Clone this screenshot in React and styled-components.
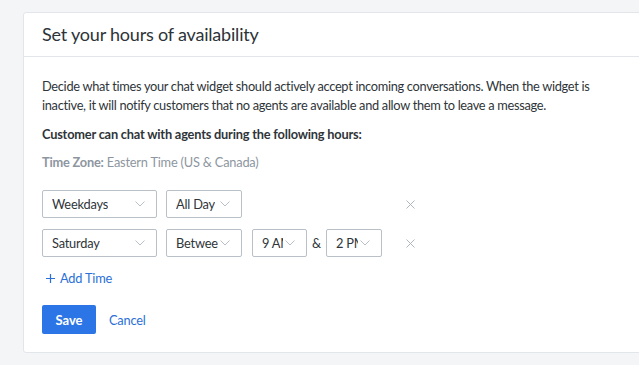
import React from 'react'
import styled, { createGlobalStyle } from 'styled-components'

const GlobalStyle = createGlobalStyle`
  body {
    margin: 0;
    background: #f4f5f7;
    font-family: "Lato", "Liberation Sans", sans-serif;
  }
`

const Chevron = () => (
  <svg width="10" height="6" viewBox="0 0 10 6" fill="none">
    <path d="M0.5 0.5l4.5 4.5 4.5-4.5" stroke="#b8bfc7" strokeWidth="1" />
  </svg>
)

const Cross = () => (
  <svg width="9" height="9" viewBox="0 0 9 9" fill="none">
    <path d="M0.5 0.5l8 8M8.5 0.5l-8 8" stroke="#b0b6bd" strokeWidth="1" />
  </svg>
)

const Plus = () => (
  <svg width="9" height="9" viewBox="0 0 9 9" fill="none">
    <path d="M4.5 0v9M0 4.5h9" stroke="#2b6fd8" strokeWidth="1.2" />
  </svg>
)

const Select = ({ value, width, offset = 0 }) => (
  <SelectBox $width={width} $offset={offset}>
    <SelectValue>{value}</SelectValue>
    <Chevron />
  </SelectBox>
)

const App = () => {
  return (
    <Page>
      <GlobalStyle />
      <Card>
        <CardHeader>Set your hours of availability</CardHeader>
        <CardBody>
          <Intro>
            Decide what times your chat widget should actively accept incoming conversations. When the widget is
            inactive, it will notify customers that no agents are available and allow them to leave a message.
          </Intro>
          <Label>Customer can chat with agents during the following hours:</Label>
          <TimeZone>
            <strong>Time Zone:</strong> Eastern Time (US &amp; Canada)
          </TimeZone>
          <Rows>
            <Row>
              <Fields>
                <Select value="Weekdays" width={115} />
                <Select value="All Day" width={76} />
              </Fields>
              <RemoveButton><Cross /></RemoveButton>
            </Row>
            <Row>
              <Fields>
                <Select value="Saturday" width={115} />
                <Select value="Betwee" width={76} />
                <Select value="9 AM" width={55} offset={1} />
                <Amp>&amp;</Amp>
                <Select value="2 PM" width={56} />
              </Fields>
              <RemoveButton><Cross /></RemoveButton>
            </Row>
          </Rows>
          <AddLink><Plus />Add Time</AddLink>
          <Actions>
            <SaveButton>Save</SaveButton>
            <CancelLink>Cancel</CancelLink>
          </Actions>
        </CardBody>
      </Card>
    </Page>
  )
}

const Page = styled.div`
  padding: 12px 0 12px 23px;
  overflow: hidden;
  height: 341px;
`

const Card = styled.div`
  width: 660px;
  height: 341px;
  box-sizing: border-box;
  background: #fff;
  border: 1px solid #e2e5ea;
  border-radius: 3px;
`

const CardHeader = styled.div`
  height: 44px;
  box-sizing: border-box;
  padding: 10px 18px 0;
  border-bottom: 1px solid #e2e5ea;
  font-size: 18px;
  letter-spacing: -0.2px;
  color: #2d3338;
`

const CardBody = styled.div`
  padding: 20px 18px 0;
  color: #2f3539;
  font-size: 12.8px;
  letter-spacing: -0.2px;
`

const Intro = styled.p`
  margin: 0;
  max-width: 560px;
  line-height: 19px;
  letter-spacing: -0.3px;
`

const Label = styled.div`
  margin-top: 10px;
  font-weight: 700;
  line-height: 19px;
`

const TimeZone = styled.div`
  margin-top: 9px;
  color: #8d96a0;
  line-height: 19px;
  strong {
    font-weight: 700;
  }
`

const Rows = styled.div`
  margin-top: 18px;
  display: flex;
  flex-direction: column;
  gap: 11px;
`

const Row = styled.div`
  display: flex;
  align-items: center;
  height: 28px;
`

const Fields = styled.div`
  display: flex;
  align-items: center;
  gap: 9px;
  width: 364px;
`

const SelectBox = styled.div`
  width: ${(p) => p.$width}px;
  height: 28px;
  margin-left: ${(p) => p.$offset}px;
  box-sizing: border-box;
  border: 1px solid #b9c0c8;
  border-radius: 2px;
  display: flex;
  align-items: center;
  padding: 0 11px 0 9px;
  gap: 2px;
  overflow: hidden;
  svg {
    flex-shrink: 0;
    margin-left: auto;
  }
`

const SelectValue = styled.span`
  white-space: nowrap;
  overflow: hidden;
  color: #2f3539;
`

const Amp = styled.span`
  margin: 0 -4px;
`

const RemoveButton = styled.div`
  display: flex;
  align-items: center;
`

const AddLink = styled.div`
  margin-top: 12px;
  margin-left: 4px;
  display: flex;
  align-items: center;
  gap: 5px;
  color: #2b6fd8;
  line-height: 19px;
`

const Actions = styled.div`
  margin-top: 17px;
  display: flex;
  align-items: center;
  gap: 13px;
`

const SaveButton = styled.button`
  width: 54px;
  height: 29px;
  border: none;
  border-radius: 2px;
  background: #2c75e6;
  color: #fff;
  font-family: inherit;
  font-size: 13px;
  font-weight: 700;
`

const CancelLink = styled.span`
  color: #2b6fd8;
`

export default App
